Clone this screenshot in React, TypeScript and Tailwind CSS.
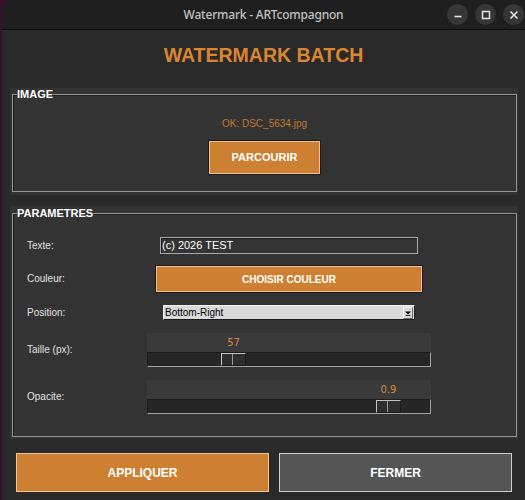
import React from "react";

function TitleButton({ children }: { children: React.ReactNode }) {
  return (
    <div className="w-[21px] h-[21px] rounded-full bg-[#363636] flex items-center justify-center">
      {children}
    </div>
  );
}

function Label({ children }: { children: React.ReactNode }) {
  return (
    <div className="w-[134px] pl-[14px] text-[10px] leading-[12px] text-[#e2e2e2]">{children}</div>
  );
}

function Scale({ value, min, max, text }: { value: number; min: number; max: number; text: string }) {
  const inner = 282;
  const thumb = 25;
  const left = Math.round(((value - min) / (max - min)) * (inner - thumb));
  return (
    <div className="w-[284px] flex flex-col">
      <div className="h-[19px] bg-[#3a3a3a] flex items-center">
        <div style={{ width: left + 1 }} />
        <div className="w-[25px] text-center font-['DejaVu_Sans',sans-serif] text-[10px] leading-[12px] text-[#d6893a]">
          {text}
        </div>
      </div>
      <div className="h-[15px] bg-[#262626] border-t border-l border-[#1c1c1c] border-r border-b border-r-[#a4a4a4] border-b-[#a4a4a4] flex">
        <div style={{ width: left }} />
        <div className="w-[25px] h-full flex bg-[#2e2e2e] border-t border-l border-[#c4c4c4] border-r border-b border-r-[#1a1a1a] border-b-[#1a1a1a]">
          <div className="w-[11px] h-full border-r border-[#9a9a9a]" />
        </div>
      </div>
    </div>
  );
}

export default function App() {
  return (
    <div className="w-[525px] h-[500px] bg-[#3a0f2d] pl-[2px] overflow-hidden flex font-['Liberation_Sans',Arial,sans-serif]">
      <div className="flex-1 flex flex-col bg-[#2a2a2a] rounded-tl-[9px] overflow-hidden">
        {/* title bar */}
        <div className="h-[30px] bg-[#1f1f1f] border-b border-[#0e0e0e] grid grid-cols-[1fr_auto_1fr] items-center">
          <div />
          <div className="font-['Noto_Sans',sans-serif] text-[12px] tracking-[-0.2px] font-medium text-[#c2c2c2] leading-none">
            Watermark - ARTcompagnon
          </div>
          <div className="flex justify-end items-center gap-[7px] pr-[1px]">
            <TitleButton>
              <svg width="10" height="10" viewBox="0 0 10 10">
                <path d="M1.5 6.5h7" stroke="#e6e6e6" strokeWidth="1.6" />
              </svg>
            </TitleButton>
            <TitleButton>
              <svg width="10" height="10" viewBox="0 0 10 10">
                <rect x="1.5" y="1.5" width="7" height="7" fill="none" stroke="#e6e6e6" strokeWidth="1.5" />
              </svg>
            </TitleButton>
            <TitleButton>
              <svg width="10" height="10" viewBox="0 0 10 10">
                <path d="M1.5 1.5l7 7M8.5 1.5l-7 7" stroke="#e6e6e6" strokeWidth="1.6" />
              </svg>
            </TitleButton>
          </div>
        </div>

        {/* heading */}
        <h1 className="mt-[14px] text-center text-[19.5px] leading-[22px] font-bold text-[#dc8530]">
          WATERMARK BATCH
        </h1>

        {/* image section */}
        <div className="mt-[22px] ml-[8px] mr-[7px] bg-[#333333] pl-[2px] pr-[1px] pb-[3px]">
          <fieldset className="border border-[#959595] shadow-[inset_1px_1px_0_#1f1f1f] flex flex-col items-center">
            <legend className="ml-[4px] text-[11px] leading-[13px] font-bold text-white">IMAGE</legend>
            <div className="mt-[16px] text-[10px] leading-[13px] text-[#c27a30]">OK: DSC_5634.jpg</div>
            <button className="mt-[10px] mb-[16px] w-[113px] h-[35px] bg-[#cd7f32] border border-[#1c1c1c] shadow-[inset_0_0_0_1px_#eebf90] text-white text-[11px] font-bold">
              PARCOURIR
            </button>
          </fieldset>
        </div>

        {/* settings section */}
        <div className="mt-[11px] ml-[8px] mr-[7px] bg-[#333333] pt-[1px] pl-[2px] pr-[1px] pb-[2px]">
          <fieldset className="border border-[#959595] shadow-[inset_1px_1px_0_#1f1f1f] flex flex-col pb-[22px]">
            <legend className="ml-[4px] text-[11px] leading-[13px] font-bold text-white">PARAMETRES</legend>

            <div className="mt-[17px] flex items-center">
              <Label>Texte:</Label>
              <div className="w-[284px] flex justify-center">
                <div className="w-[258px] h-[17px] bg-[#343434] border border-[#a9a9a9] shadow-[inset_1px_1px_0_#1c1c1c] flex items-center pl-[1px] text-[11px] leading-[13px] text-white">
                  (c) 2026 TEST
                </div>
              </div>
            </div>

            <div className="mt-[11px] flex items-center">
              <Label>Couleur:</Label>
              <div className="w-[284px] flex justify-center">
                <button className="w-[268px] h-[28px] bg-[#cd7f32] border border-[#1c1c1c] shadow-[inset_0_0_0_1px_#eebf90] text-white text-[10px] font-bold">
                  CHOISIR COULEUR
                </button>
              </div>
            </div>

            <div className="mt-[12px] flex items-center">
              <Label>Position:</Label>
              <div className="w-[284px] flex justify-center">
                <div className="w-[252px] h-[15px] bg-[#d9d9d9] border-t border-l border-[#f4f4f4] border-r border-b border-r-[#1a1a1a] border-b-[#1a1a1a] flex items-center">
                  <span className="flex-1 pl-[1px] text-[10px] leading-[12px] text-black">Bottom-Right</span>
                  <div className="w-[10px] h-[12px] mr-[1px] bg-[#d9d9d9] border-t border-l border-[#f4f4f4] border-r border-b border-r-[#6a6a6a] border-b-[#6a6a6a] flex items-center justify-center">
                    <svg width="6" height="6" viewBox="0 0 6 6">
                      <path d="M0 1.5h6L3 4.5z" fill="#000" />
                      <path d="M0.5 5.5h5" stroke="#000" strokeWidth="0.8" />
                    </svg>
                  </div>
                </div>
              </div>
            </div>

            <div className="mt-[13px] flex items-center">
              <Label>Taille (px):</Label>
              <Scale value={57} min={0} max={200} text="57" />
            </div>

            <div className="mt-[13px] flex items-center">
              <Label>Opacite:</Label>
              <Scale value={0.9} min={0.1} max={1} text="0.9" />
            </div>
          </fieldset>
        </div>

        {/* actions */}
        <div className="mt-[14px] ml-[14px] flex gap-[10px]">
          <button className="w-[253px] h-[39px] bg-[#cd7f32] border border-[#f0c59a] text-white text-[12px] font-bold">
            APPLIQUER
          </button>
          <button className="w-[233px] h-[39px] bg-[#555555] border border-[#cdcdcd] text-white text-[12px] font-bold">
            FERMER
          </button>
        </div>
      </div>
    </div>
  );
}
